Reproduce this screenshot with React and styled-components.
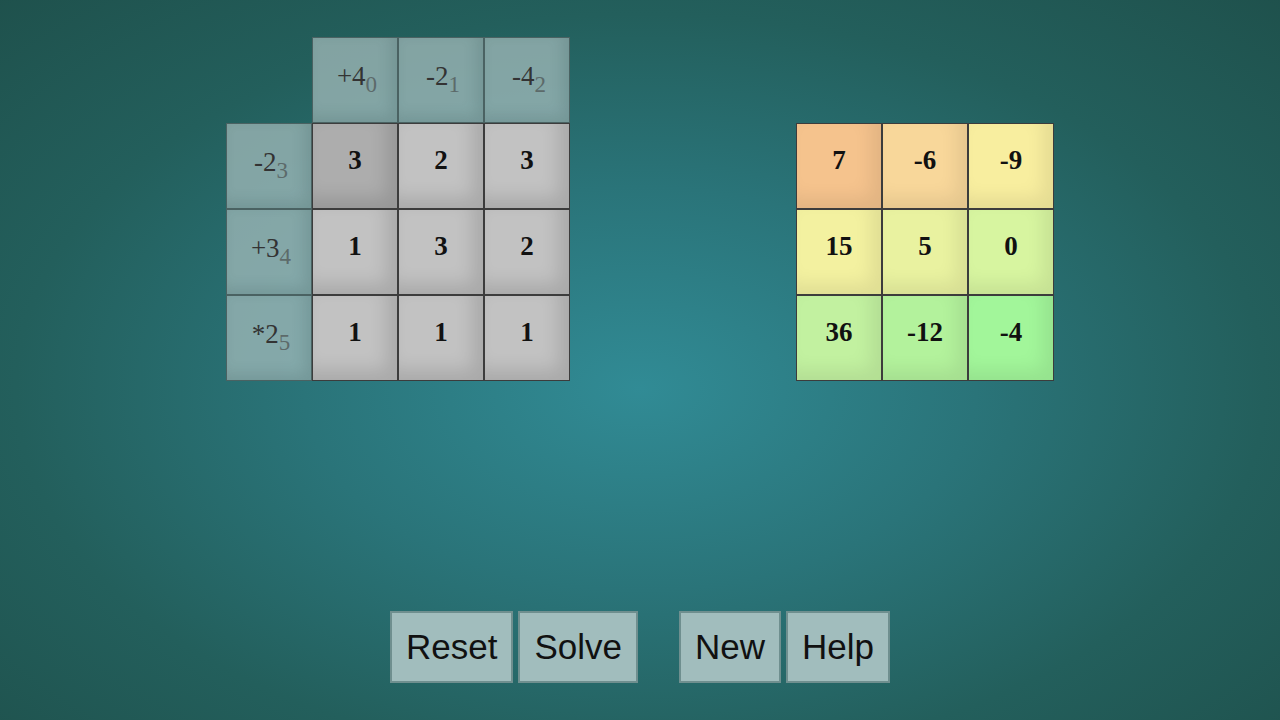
import React from 'react'
import styled, { createGlobalStyle } from 'styled-components'

const GlobalStyle = createGlobalStyle`
  html, body {
    margin: 0;
    padding: 0;
    height: 100%;
  }
  body {
    background: #1e4f4a;
    overflow: hidden;
  }
`

const rowOps = [['+', 4, 0], ['-', 2, 1], ['-', 4, 2]]
const colOps = [['-', 2, 3], ['+', 3, 4], ['*', 2, 5]]
const tiles = [[3, 2, 3], [1, 3, 2], [1, 1, 1]]
const target = [
  [{ v: 7, c: '#f5c38d' }, { v: -6, c: '#f8d79a' }, { v: -9, c: '#f8ee9f' }],
  [{ v: 15, c: '#f3f1a0' }, { v: 5, c: '#e9f2a0' }, { v: 0, c: '#d7f5a0' }],
  [{ v: 36, c: '#c2f1a0' }, { v: -12, c: '#b3f29c' }, { v: -4, c: '#a2f69a' }],
]

const App = () => {
  return (
    <Page>
      <GlobalStyle />
      <Boards>
        <Board>
          <Blank />
          {rowOps.map(([op, n, i]) => (
            <OpCell key={i}>
              {op}{n}<sub>{i}</sub>
            </OpCell>
          ))}
          {tiles.map((row, r) => (
            <React.Fragment key={r}>
              <OpCell>
                {colOps[r][0]}{colOps[r][1]}<sub>{colOps[r][2]}</sub>
              </OpCell>
              {row.map((v, c) => (
                <Tile key={c} $dark={r === 0 && c === 0}>{v}</Tile>
              ))}
            </React.Fragment>
          ))}
        </Board>
        <Target>
          {target.flat().map((t, i) => (
            <Tile key={i} $bg={t.c}>{t.v}</Tile>
          ))}
        </Target>
      </Boards>
      <Controls>
        <Group>
          <Button>Reset</Button>
          <Button>Solve</Button>
        </Group>
        <Group>
          <Button>New</Button>
          <Button>Help</Button>
        </Group>
      </Controls>
    </Page>
  )
}

export default App

const Page = styled.div`
  width: 1280px;
  height: 720px;
  box-sizing: border-box;
  padding-top: 37px;
  display: flex;
  flex-direction: column;
  background: radial-gradient(ellipse 75% 80% at 50% 54%, #318b95 0%, #2a7479 35%, #235f5c 65%, #1e4f4a 100%);
`

const Boards = styled.div`
  display: flex;
  align-items: flex-start;
  padding-left: 226px;
  gap: 226px;
`

const Board = styled.div`
  display: grid;
  grid-template-columns: repeat(4, 86px);
  grid-auto-rows: 86px;
`

const Blank = styled.div``

const OpCell = styled.div`
  box-sizing: border-box;
  border: 1px solid #4a6262;
  background: rgba(165, 188, 188, 0.74);
  box-shadow: inset -6px -6px 14px rgba(40, 70, 70, 0.16);
  display: flex;
  align-items: center;
  justify-content: center;
  font-family: "Liberation Serif", "Times New Roman", serif;
  font-size: 27px;
  color: #333;
  padding-left: 4px;
  padding-bottom: 8px;

  sub {
    font-size: 23px;
    color: #5c6a6a;
    vertical-align: baseline;
    position: relative;
    top: 9px;
  }
`

const Tile = styled.div`
  box-sizing: border-box;
  border: 1px solid #3c3c3c;
  background: ${p => p.$bg || (p.$dark ? '#adadad' : '#c2c2c2')};
  box-shadow: inset -10px -10px 18px rgba(0, 0, 0, ${p => (p.$bg ? 0.08 : 0.13)});
  display: flex;
  align-items: center;
  justify-content: center;
  font-family: "Liberation Serif", "Times New Roman", serif;
  font-weight: bold;
  font-size: 27px;
  color: #111;
  padding-bottom: 12px;
`

const Target = styled.div`
  margin-top: 86px;
  display: grid;
  grid-template-columns: repeat(3, 86px);
  grid-auto-rows: 86px;
`

const Controls = styled.div`
  margin-top: auto;
  margin-bottom: 37px;
  display: flex;
  justify-content: center;
  gap: 41px;
`

const Group = styled.div`
  display: flex;
  gap: 5px;
`

const Button = styled.button`
  height: 72px;
  padding: 0 14px;
  box-sizing: border-box;
  border: 2px solid #6f8f8f;
  background: #a1bdbd;
  font-family: "Liberation Sans", Arial, sans-serif;
  font-size: 35px;
  color: #111;
  cursor: pointer;
`
